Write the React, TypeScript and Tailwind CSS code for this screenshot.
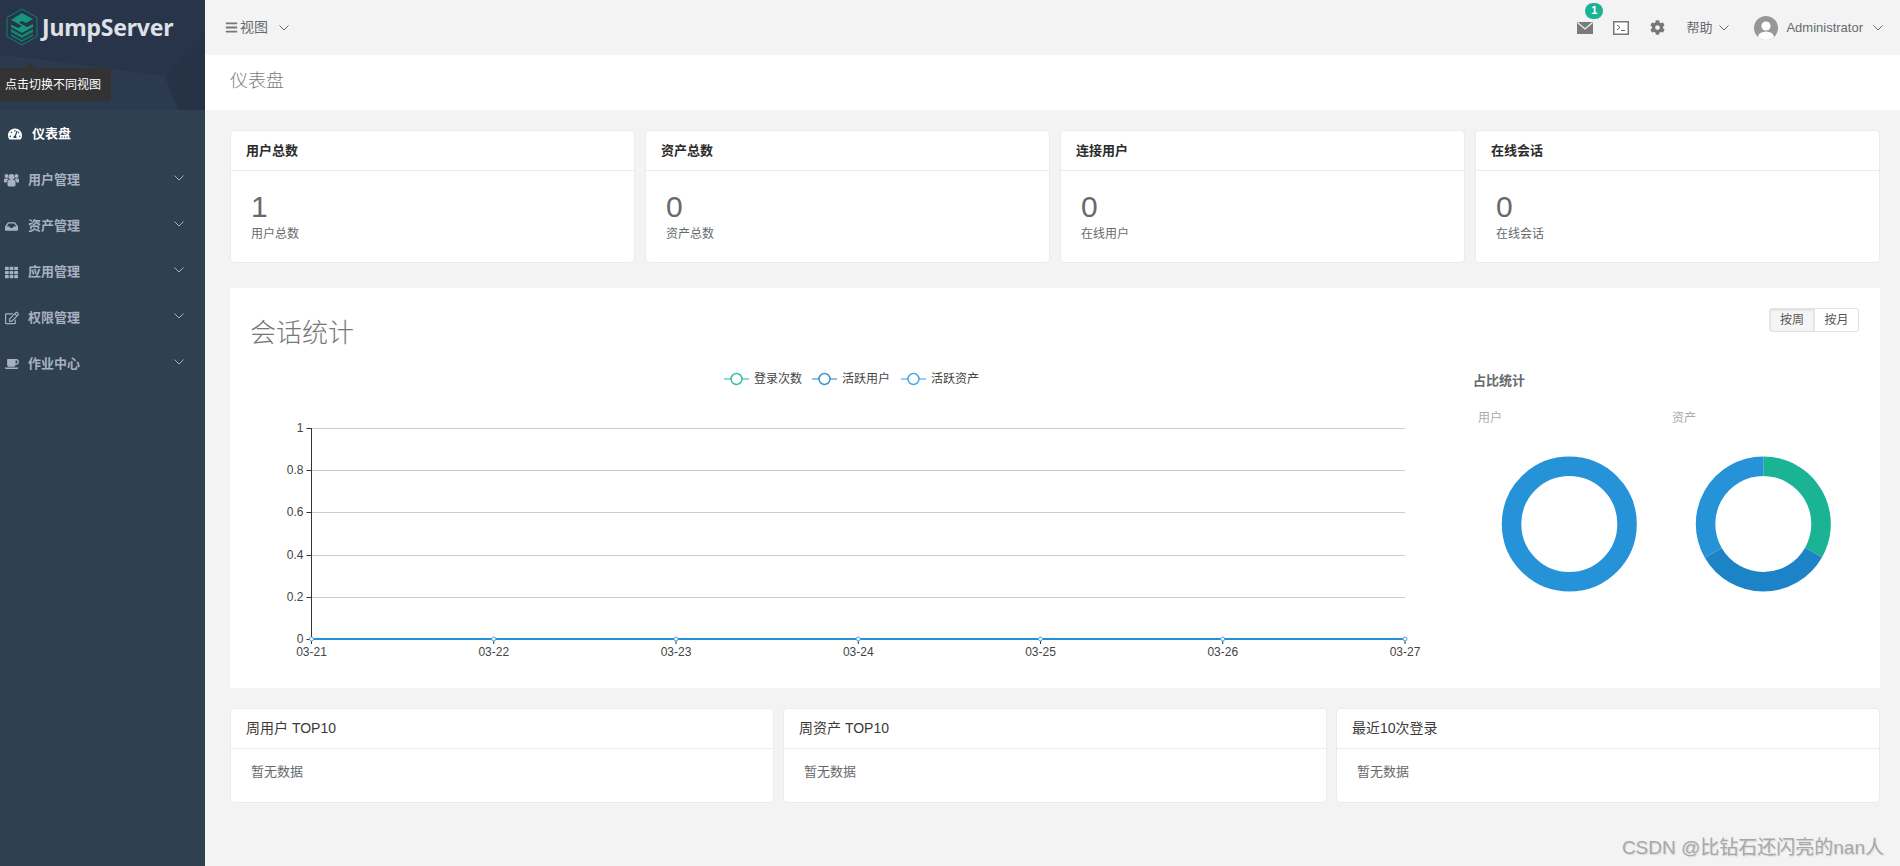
import React from "react";
import { FaBars, FaCog, FaCoffee, FaInbox, FaRegEdit, FaTachometerAlt, FaTh } from "react-icons/fa";

const font = "font-['Liberation_Sans','Noto_Sans_CJK_SC',sans-serif]";

/* =========================
   Small drawn icons
   ========================= */
const Chevron: React.FC<{ className?: string }> = ({ className }) => (
  <svg width="10" height="6" viewBox="0 0 10 6" fill="none" className={className}>
    <path d="M0.5 0.5 L5 5 L9.5 0.5" stroke="currentColor" strokeWidth="1" />
  </svg>
);

const Logo: React.FC = () => (
  <svg width="32" height="38" viewBox="0 0 32 38" className="shrink-0">
    <path d="M16 1 L31 9.5 L31 28.5 L16 37 L1 28.5 L1 9.5 Z" fill="none" stroke="#12806c" strokeWidth="1" />
    <path d="M16 5 L27 11 L20 15 L16 13 L13 14.5 L21 19 L27 16 L27 19 L16 25 L5 19 L5 16.5 L12 20 L16 18 L8 13.5 L5 12 Z" fill="#16967d" />
    <path d="M5 21 L16 27 L27 21 L27 24 L16 30 L5 24 Z" fill="#12866f" />
    <path d="M5 26 L16 32 L27 26 L27 28 L16 34 L5 28 Z" fill="#0f7a65" />
  </svg>
);

const Users: React.FC = () => (
  <svg width="15" height="14" viewBox="0 0 15 14" fill="currentColor">
    <circle cx="7.5" cy="4" r="3" />
    <circle cx="2.5" cy="3" r="2" />
    <circle cx="12.5" cy="3" r="2" />
    <path d="M3.5 8.5 Q3.5 7 5 7 H10 Q11.5 7 11.5 8.5 V12 Q11.5 13.5 10 13.5 H5 Q3.5 13.5 3.5 12 Z" />
    <path d="M0 6.5 Q0 5.5 1 5.5 H3.5 Q4 6 4.5 6.5 Q2.8 7 2.6 9.5 H0 Z" />
    <path d="M15 6.5 Q15 5.5 14 5.5 H11.5 Q11 6 10.5 6.5 Q12.2 7 12.4 9.5 H15 Z" />
  </svg>
);

const Envelope: React.FC = () => (
  <svg width="16" height="12" viewBox="0 0 16 12">
    <rect width="16" height="12" fill="#7a7a7a" />
    <path d="M0.5 0.5 L8 7 L15.5 0.5" fill="none" stroke="#f3f3f4" strokeWidth="1.2" />
  </svg>
);

const TerminalBox: React.FC = () => (
  <svg width="16" height="14" viewBox="0 0 16 14" fill="none">
    <rect x="0.75" y="0.75" width="14.5" height="12.5" fill="#fff" stroke="#777" strokeWidth="1.5" />
    <path d="M4 4 L7 6.5 L4 9" stroke="#666" strokeWidth="1" />
    <path d="M8 9.5 H12" stroke="#666" strokeWidth="1" />
  </svg>
);

const Avatar: React.FC = () => (
  <svg width="24" height="24" viewBox="0 0 24 24">
    <defs>
      <clipPath id="avatar-clip">
        <circle cx="12" cy="12" r="12" />
      </clipPath>
    </defs>
    <circle cx="12" cy="12" r="12" fill="#979797" />
    <g clipPath="url(#avatar-clip)">
      <circle cx="12" cy="10" r="4.6" fill="#fff" />
      <ellipse cx="12" cy="21" rx="8" ry="5.6" fill="#fff" />
    </g>
  </svg>
);

/* =========================
   Sidebar
   ========================= */
const menu = [
  { label: "用户管理", icon: <Users /> },
  { label: "资产管理", icon: <FaInbox size={13} /> },
  { label: "应用管理", icon: <FaTh size={13} /> },
  { label: "权限管理", icon: <FaRegEdit size={14} /> },
  { label: "作业中心", icon: <FaCoffee size={14} /> },
];

const Sidebar: React.FC = () => (
  <aside className="w-[205px] shrink-0 bg-[#2f4050]">
    <div className="relative h-[110px] overflow-hidden bg-[#27344a]">
      <svg width="205" height="110" viewBox="0 0 205 110" className="absolute inset-0">
        <path d="M0 55 L30 58 L165 76 L178 110 L0 110 Z" fill="#2c3a4f" />
        <path d="M165 76 L205 30 L205 110 L178 110 Z" fill="#263347" />
      </svg>
      <div className="relative flex items-center gap-[4px] pl-[6px] pt-[8px]">
        <Logo />
        <span className="font-['Noto_Sans',sans-serif] text-[23px] font-bold leading-[38px] tracking-[-0.2px] text-[#dfe1e6]">JumpServer</span>
      </div>
      <div className="absolute left-0 top-[68px] flex h-[33px] w-[111px] items-center rounded-r-[4px] bg-[#333333] pl-[5px] text-[12px] text-white">
        点击切换不同视图
      </div>
      <div className="absolute left-[24px] top-[62px] h-0 w-0 border-x-[6px] border-b-[6px] border-x-transparent border-b-[#333333]" />
    </div>
    <nav className="pt-[1px]">
      <a className="flex h-[46px] items-center pl-[8px] text-[13px] font-bold text-white">
        <FaTachometerAlt size={14} />
        <span className="ml-[10px]">仪表盘</span>
      </a>
      {menu.map((item) => (
        <a key={item.label} className="flex h-[46px] items-center text-[13px] font-bold text-[#a7b1c2]">
          <span className="flex w-[28px] justify-center pr-[5px]">{item.icon}</span>
          <span>{item.label}</span>
          <Chevron className="ml-auto mr-[21px] mt-[-4px]" />
        </a>
      ))}
    </nav>
  </aside>
);

/* =========================
   Top bar
   ========================= */
const TopBar: React.FC = () => (
  <header className="flex h-[55px] items-center pl-[20px] pr-[17px] text-[#676a6c]">
    <FaBars size={13} className="text-[#777]" />
    <span className="ml-[2px] text-[14px]">视图</span>
    <Chevron className="ml-[11px]" />
    <div className="ml-auto flex items-center">
      <div className="relative">
        <Envelope />
        <span className="absolute left-[8px] top-[-19px] flex h-[16px] w-[18px] items-center justify-center rounded-full bg-[#1ab394] text-[11px] font-bold text-white">1</span>
      </div>
      <span className="ml-[20px] flex"><TerminalBox /></span>
      <FaCog size={15} className="ml-[21px] text-[#777]" />
      <span className="ml-[21px] text-[13px]">帮助</span>
      <Chevron className="ml-[7px]" />
      <span className="ml-[25px] flex"><Avatar /></span>
      <span className="ml-[8px] text-[13px]">Administrator</span>
      <Chevron className="ml-[10px]" />
    </div>
  </header>
);

/* =========================
   Cards
   ========================= */
const stats = [
  { title: "用户总数", value: "1", label: "用户总数" },
  { title: "资产总数", value: "0", label: "资产总数" },
  { title: "连接用户", value: "0", label: "在线用户" },
  { title: "在线会话", value: "0", label: "在线会话" },
];

const StatCard: React.FC<(typeof stats)[number]> = ({ title, value, label }) => (
  <div className="h-[133px] rounded-[4px] border border-[#e9ebf0] bg-white">
    <div className="flex h-[40px] items-center border-b border-[#e9ebf0] pl-[15px] text-[13px] font-bold text-[#2b2b2b]">{title}</div>
    <div className="pl-[20px] pt-[21px] text-[#676a6c]">
      <div className="h-[30px] text-[30px] leading-[30px]">{value}</div>
      <div className="mt-[3px] text-[12px] leading-[18px]">{label}</div>
    </div>
  </div>
);

const ListCard: React.FC<{ title: string }> = ({ title }) => (
  <div className="h-[95px] rounded-[4px] border border-[#e9ebf0] bg-white">
    <div className="flex h-[40px] items-center border-b border-[#e9ebf0] pl-[15px] text-[14px] text-[#3a3a3a]">{title}</div>
    <div className="pl-[20px] pt-[14px] text-[13px] leading-[18px] text-[#676a6c]">暂无数据</div>
  </div>
);

/* =========================
   Charts
   ========================= */
const yTicks = ["1", "0.8", "0.6", "0.4", "0.2", "0"];
const days = ["03-21", "03-22", "03-23", "03-24", "03-25", "03-26", "03-27"];
const legend = [
  { label: "登录次数", x: 474, color: "#1ab394" },
  { label: "活跃用户", x: 562, color: "#1c84c6" },
  { label: "活跃资产", x: 651, color: "#2e9be0" },
];

const LineChart: React.FC = () => {
  const left = 61.5;
  const stepX = 182.25;
  const top = 78;
  const stepY = 42.2;
  const bottom = top + stepY * 5;
  return (
    <svg width="1200" height="330" viewBox="0 0 1200 330" className="shrink-0">
      {legend.map((l) => (
        <g key={l.label}>
          <path d={`M${l.x} 29 H${l.x + 25}`} stroke={l.color} strokeOpacity="0.65" strokeWidth="1.5" />
          <circle cx={l.x + 12.5} cy="29" r="5.5" fill="#fff" stroke={l.color} strokeOpacity="0.85" strokeWidth="1.5" />
          <text x={l.x + 30} y="33" fontSize="12" fill="#444">{l.label}</text>
        </g>
      ))}
      {yTicks.map((t, i) => {
        const y = Math.round(top + stepY * i);
        return (
          <g key={t}>
            {i < 5 && <path d={`M${left} ${y + 0.5} H${left + stepX * 6}`} stroke="#ccc" strokeWidth="1" />}
            <path d={`M${left - 5} ${y + 0.5} H${left}`} stroke="#333" strokeWidth="1" />
            <text x={left - 8} y={y + 4} fontSize="12" fill="#444" textAnchor="end">{t}</text>
          </g>
        );
      })}
      <path d={`M${left} ${top} V${bottom + 5}`} stroke="#333" strokeWidth="1" />
      <path d={`M${left} ${bottom} H${left + stepX * 6}`} stroke="#2492db" strokeWidth="2" />
      {days.map((d, i) => {
        const x = left + stepX * i;
        return (
          <g key={d}>
            <path d={`M${x} ${bottom} v5`} stroke="#333" strokeWidth="1" />
            <circle cx={x} cy={bottom} r="2" fill="#fff" stroke="#47a6e0" strokeWidth="1" />
            <text x={x} y={bottom + 17} fontSize="12" fill="#444" textAnchor="middle">{d}</text>
          </g>
        );
      })}
    </svg>
  );
};

const arc = (fromDeg: number, toDeg: number) => {
  const cx = 96.3;
  const cy = 75;
  const R = 67.5;
  const r = 48;
  const p = (rad: number, deg: number) => {
    const a = ((deg - 90) * Math.PI) / 180;
    return `${(cx + rad * Math.cos(a)).toFixed(2)} ${(cy + rad * Math.sin(a)).toFixed(2)}`;
  };
  return `M${p(R, fromDeg)} A${R} ${R} 0 0 1 ${p(R, toDeg)} L${p(r, toDeg)} A${r} ${r} 0 0 0 ${p(r, fromDeg)} Z`;
};

const FullDonut: React.FC = () => (
  <svg width="194" height="150" viewBox="0 0 194 150">
    <circle cx="96.3" cy="75" r="57.75" fill="none" stroke="#2692d8" strokeWidth="19.5" />
  </svg>
);

const Donut: React.FC<{ parts: { from: number; to: number; color: string }[] }> = ({ parts }) => (
  <svg width="194" height="150" viewBox="0 0 194 150">
    {parts.map((s) => (
      <path key={s.from} d={arc(s.from, s.to)} fill={s.color} />
    ))}
  </svg>
);

/* =========================
   Page
   ========================= */
export default function App() {
  return (
    <div className={`flex h-[866px] overflow-hidden bg-[#f3f3f4] ${font}`}>
      <Sidebar />
      <main className="relative min-w-0 flex-1">
        <TopBar />
        <div className="flex h-[55px] items-center bg-white pb-[2px] pl-[25px] text-[18px] font-light text-[#7a7d80]">仪表盘</div>

        <div className="grid grid-cols-4 gap-[10px] pl-[25px] pr-[20px] pt-[20px]">
          {stats.map((s) => (
            <StatCard key={s.title} {...s} />
          ))}
        </div>

        <section className="ml-[25px] mr-[20px] mt-[25px] h-[400px] bg-white">
          <div className="flex items-start justify-between pl-[20px] pr-[21px] pt-[20px]">
            <h2 className="mt-[8px] text-[26px] font-light leading-[34px] text-[#777]">会话统计</h2>
            <div className="flex h-[24px] text-[12px] text-[#555]">
              <button className="w-[46px] rounded-l-[3px] border border-[#e0e2e8] bg-[#f5f5f5] shadow-[inset_0_1px_3px_rgba(0,0,0,0.12)]">按周</button>
              <button className="ml-[-1px] w-[45px] rounded-r-[3px] border border-[#e0e2e8] bg-white">按月</button>
            </div>
          </div>
          <div className="flex pl-[20px]">
            <LineChart />
            <div className="ml-[23px] pt-[22px]">
              <h3 className="text-[13px] font-bold leading-[18px] text-[#676a6c]">占比统计</h3>
              <div className="flex">
                <div className="w-[194px]">
                  <div className="mt-[20px] pl-[5px] text-[12px] leading-[16px] text-[#aaa]">用户</div>
                  <div className="mt-[23px] flex">
                    <FullDonut />
                  </div>
                </div>
                <div className="w-[194px]">
                  <div className="mt-[20px] pl-[5px] text-[12px] leading-[16px] text-[#aaa]">资产</div>
                  <div className="mt-[23px] flex">
                    <Donut
                      parts={[
                        { from: 0, to: 119.5, color: "#1ab394" },
                        { from: 119.5, to: 240, color: "#1c84c6" },
                        { from: 240, to: 360, color: "#2692d8" },
                      ]}
                    />
                  </div>
                </div>
              </div>
            </div>
          </div>
        </section>

        <div className="grid grid-cols-3 gap-[9px] pl-[25px] pr-[20px] pt-[20px]">
          <ListCard title="周用户 TOP10" />
          <ListCard title="周资产 TOP10" />
          <ListCard title="最近10次登录" />
        </div>

        <span className="absolute bottom-[6px] right-[16px] text-[19px] leading-[24px] text-[#a8a8a8] [text-shadow:1px_1px_1px_rgba(0,0,0,0.12)]">CSDN @比钻石还闪亮的nan人</span>
      </main>
    </div>
  );
}
